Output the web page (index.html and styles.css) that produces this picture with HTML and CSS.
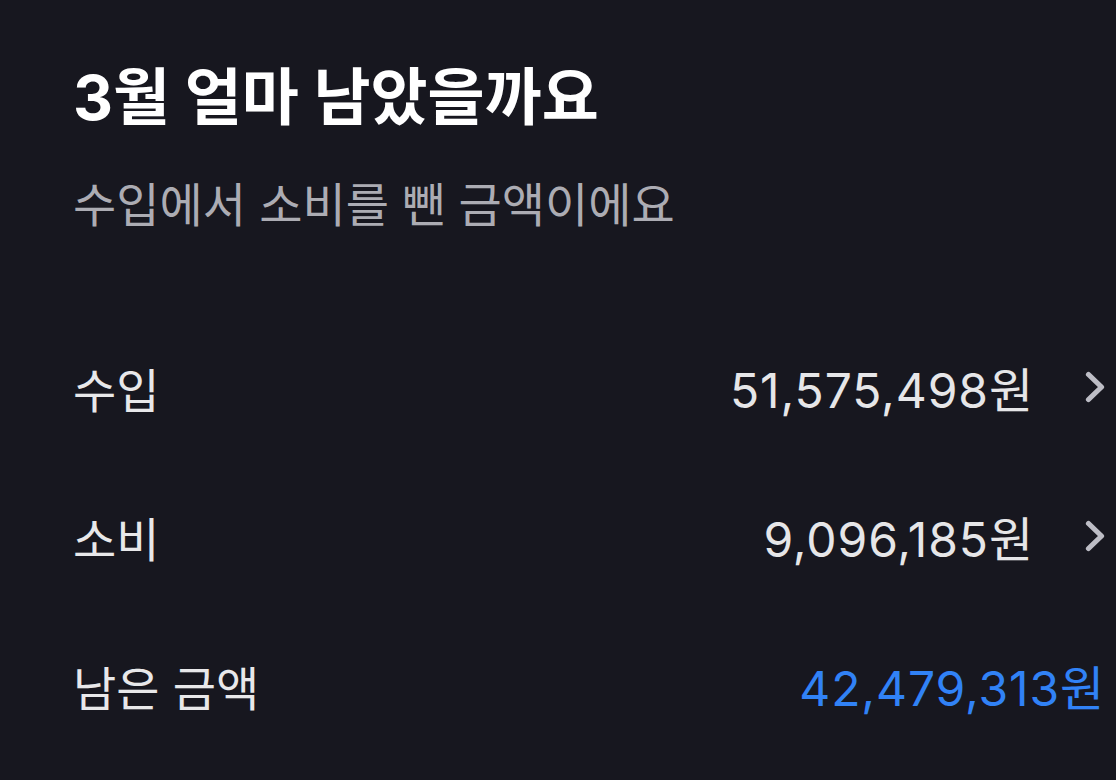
FILE: index.html
```html
<!DOCTYPE html>
<html lang="ko">
<head>
<meta charset="utf-8">
<link rel="stylesheet" href="styles.css">
</head>
<body>
<main class="page">
  <header class="head">
    <h1 class="title">3월 얼마 남았을까요</h1>
    <p class="subtitle">수입에서 소비를 뺀 금액이에요</p>
  </header>
  <ul class="rows">
    <li class="row">
      <span class="label">수입</span>
      <span class="value">51,575,498원</span>
      <svg class="chev" viewBox="0 0 20 32" width="20" height="32"><path d="M3.5 3.5 L16.5 16 L3.5 28.5" fill="none" stroke="currentColor" stroke-width="5.2" stroke-linecap="round" stroke-linejoin="round"/></svg>
    </li>
    <li class="row">
      <span class="label">소비</span>
      <span class="value">9,096,185원</span>
      <svg class="chev" viewBox="0 0 20 32" width="20" height="32"><path d="M3.5 3.5 L16.5 16 L3.5 28.5" fill="none" stroke="currentColor" stroke-width="5.2" stroke-linecap="round" stroke-linejoin="round"/></svg>
    </li>
    <li class="row">
      <span class="label">남은 금액</span>
      <span class="value blue">42,479,313원</span>
    </li>
  </ul>
</main>
</body>
</html>
```
FILE: styles.css
```css
html, body {
  margin: 0;
  padding: 0;
  background: #17171f;
}
body {
  font-family: Inter, "Noto Sans CJK KR", sans-serif;
  color: #e6e6e8;
  width: 1116px;
  height: 780px;
  overflow: hidden;
}
.page {
  padding: 62px 11px 0 73px;
}
.head {
  display: flex;
  flex-direction: column;
}
.title {
  margin: 0;
  font-size: 62px;
  font-weight: 700;
  line-height: 72px;
  color: #ffffff;
}
.subtitle {
  margin: 43px 0 0;
  font-size: 47px;
  line-height: 56px;
  color: #acacb3;
}
.rows {
  list-style: none;
  margin: 126px 0 0;
  padding: 0;
  display: flex;
  flex-direction: column;
  gap: 93px;
}
.row {
  display: flex;
  align-items: center;
  height: 56px;
}
.label {
  font-size: 47px;
  flex: 1;
  color: #e8e8ea;
}
.value {
  font-size: 48px;
  color: #e6e6e8;
  letter-spacing: 0.9px;
}
.chev {
  color: #bdbdc5;
  margin-left: 51px;
}
.blue {
  color: #3182f6;
}
```
